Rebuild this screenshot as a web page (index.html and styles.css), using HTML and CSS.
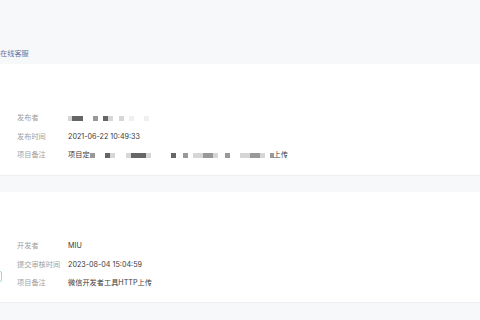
FILE: index.html
```html
<!DOCTYPE html>
<html lang="zh-CN">
<head>
<meta charset="utf-8">
<link rel="stylesheet" href="styles.css">
</head>
<body>
<div class="top"><a class="service">在线客服</a></div>
<section class="card">
  <div class="rows">
    <div class="row"><span class="label">发布者</span><span class="value mosaic"><i class="m l w4"></i><i class="m d w11"></i><i class="m x w10"></i><i class="m g w5"></i><i class="m x w5"></i><i class="m d w5"></i><i class="m l w5"></i><i class="m x w6"></i><i class="m l w5"></i><i class="m x w5"></i><i class="m v w5"></i><i class="m x w10"></i><i class="m v w5"></i></span></div>
    <div class="row"><span class="label">发布时间</span><span class="value">2021-06-22 10:49:33</span></div>
    <div class="row"><span class="label">项目备注</span><span class="value mosaic">项目定<i class="m g w5"></i><i class="m x w10"></i><i class="m d w5"></i><i class="m l w5"></i><i class="m x w11"></i><i class="m l w5"></i><i class="m d w15"></i><i class="m l w5"></i><i class="m x w20"></i><i class="m d w5"></i><i class="m x w7"></i><i class="m g w5"></i><i class="m x w5"></i><i class="m l w10"></i><i class="m g w10"></i><i class="m l w5"></i><i class="m x w7"></i><i class="m g w5"></i><i class="m x w10"></i><i class="m l w10"></i><i class="m g w10"></i><i class="m l w5"></i><i class="m x w5"></i><i class="m g w4"></i>上传</span></div>
  </div>
</section>
<section class="card card2">
  <div class="tag"></div>
  <div class="rows">
    <div class="row"><span class="label">开发者</span><span class="value">MIU</span></div>
    <div class="row"><span class="label">提交审核时间</span><span class="value">2023-08-04 15:04:59</span></div>
    <div class="row"><span class="label">项目备注</span><span class="value">微信开发者工具HTTP上传</span></div>
  </div>
</section>
</body>
</html>
```
FILE: styles.css
```css
html, body {
  margin: 0;
  padding: 0;
}
body {
  background: #f7f8fa;
  font-family: Inter, "Noto Sans CJK SC", sans-serif;
  font-size: 7.2px;
  color: #3a3a3a;
  width: 480px;
  height: 320px;
  overflow: hidden;
}
.top {
  height: 64px;
  box-sizing: border-box;
  padding-top: 46px;
  line-height: 15px;
}
.service {
  color: #6373a0;
}
.card {
  background: #fff;
  border-bottom: 1px solid #eceef1;
  padding: 45px 0 10.5px 17px;
  display: flex;
}
.card2 {
  margin-top: 16px;
  padding-bottom: 9.5px;
  position: relative;
}
.tag {
  position: absolute;
  left: -20px;
  top: 79px;
  width: 20px;
  height: 9px;
  border: 1px solid #a6dbb7;
  border-radius: 2px;
}
.rows {
  display: flex;
  flex-direction: column;
}
.row {
  display: flex;
  height: 18.5px;
  line-height: 18.5px;
  white-space: nowrap;
}
.label {
  width: 51px;
  color: #a0a0a0;
  flex: none;
}
.value {
  color: #3a3a3a;
}
.mosaic {
  display: flex;
  align-items: center;
}
.m {
  display: inline-block;
  height: 5px;
}
.d { background: #666; }
.g { background: #999; }
.l { background: #d6d6d6; }
.v { background: #f0f0f0; }
.x { background: transparent; }
.w4 { width: 4px; }
.w5 { width: 5px; }
.w6 { width: 6px; }
.w7 { width: 7px; }
.w10 { width: 10px; }
.w11 { width: 11px; }
.w15 { width: 15px; }
.w20 { width: 20px; }
```
